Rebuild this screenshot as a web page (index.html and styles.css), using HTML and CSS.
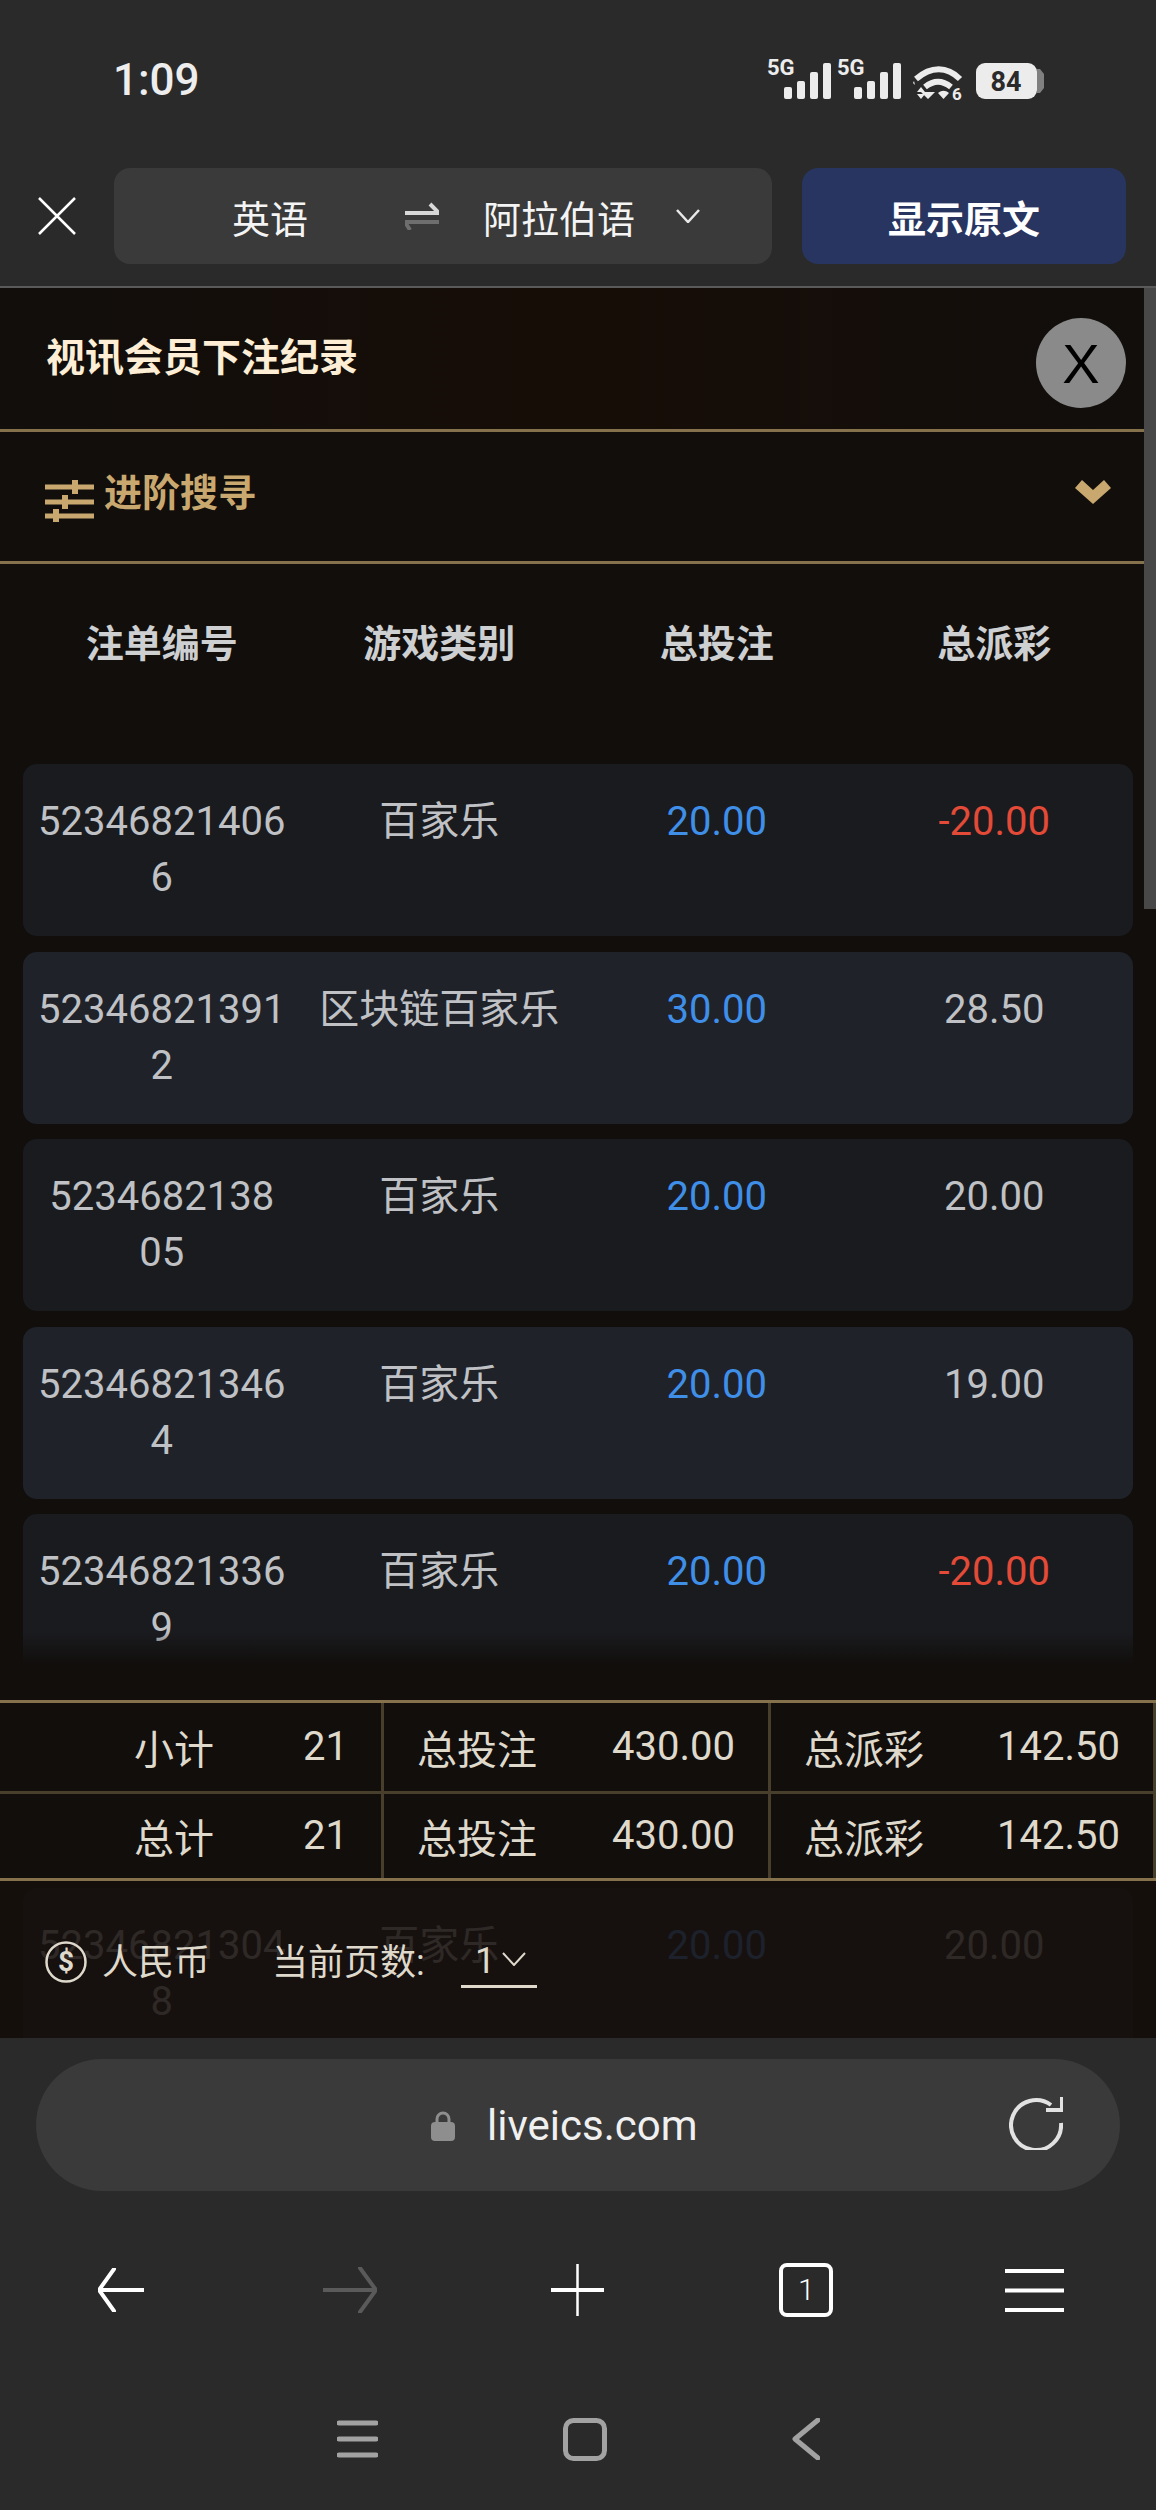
FILE: index.html
```html
<!DOCTYPE html>
<html lang="zh">
<head>
<meta charset="utf-8">
<title>视讯会员下注纪录</title>
<link rel="stylesheet" href="styles.css">
</head>
<body>
<div class="phone">
  <header class="chrome-top">
    <div class="status">
      <span class="time">1:09</span>
      <svg class="status-icons" width="290" height="46" viewBox="760 58 290 46">
        <g class="sig">
          <text x="767" y="75" class="fiveg">5G</text>
          <rect x="784" y="87" width="8" height="12" rx="2"/><rect x="797" y="81" width="8" height="18" rx="2"/><rect x="810" y="72" width="8" height="27" rx="2"/><rect x="823" y="63" width="8" height="36" rx="2"/>
          <text x="837" y="75" class="fiveg">5G</text>
          <rect x="854" y="87" width="8" height="12" rx="2"/><rect x="867" y="81" width="8" height="18" rx="2"/><rect x="880" y="72" width="8" height="27" rx="2"/><rect x="893" y="63" width="8" height="36" rx="2"/>
          <path d="M928 99l-7-7h14z M913 86l-0 0 M915 85l-2-2 1-2 M921 88l-0 0"/>
          <path class="wifi" d="M916 79c15-13 31-13 44 0M925 87c9-7 17-7 26 0" />
          <path d="M938 93c4-3 7-3 11 0l-5.500 6z"/>
          <path d="M917 92l4-5 4 5zM917 94h8l-4 5z"/>
          <text x="952" y="100" class="six">6</text>
          <rect x="976" y="63" width="61" height="36" rx="9"/>
          <path class="bat-cap" d="M1037 69l3 0 4 5v14l-4 5h-3z"/>
          <text x="1006" y="91" class="batt">84</text>
        </g>
      </svg>
    </div>
    <div class="toolbar">
      <svg class="tool-x" width="38" height="38" viewBox="0 0 38 38"><path d="M1 1l36 36M37 1L1 37"/></svg>
      <div class="lang-pill">
        <span class="lang-a">英语</span>
        <svg class="swap" width="34" height="28" viewBox="0 0 34 28"><path class="swap-a" d="M0 11h34l-9-9"/><path class="swap-b" d="M34 20H0l5 8"/></svg>
        <span class="lang-b">阿拉伯语</span>
        <svg class="lang-chev" width="24" height="14" viewBox="0 0 24 14"><path d="M1 1l11 12L23 1"/></svg>
      </div>
      <button class="show-orig">显示原文</button>
    </div>
  </header>

  <main class="view">
    <div class="scrollbar"></div>
    <div class="title-row">
      <h1 class="title">视讯会员下注纪录</h1>
      <button class="close">X</button>
    </div>
    <div class="adv-row">
      <div class="adv-left">
        <svg class="adv-icon" width="49" height="42" viewBox="0 0 49 42"><path d="M0 7h49M0 22h49M0 36h49"/><path class="knob" d="M30 0v14M20 15v14M11 29v13"/></svg>
        <span class="adv-text">进阶搜寻</span>
      </div>
      <svg class="adv-chev" width="36" height="24" viewBox="0 0 36 24"><path d="M0 8l7-8 11 10L29 0l7 8-18 16z"/></svg>
    </div>
    <div class="grid head">
      <div>注单编号</div><div>游戏类别</div><div>总投注</div><div>总派彩</div>
    </div>
    <div class="cards">
      <div class="grid card"><div>52346821406<br>6</div><div>百家乐</div><div class="blue">20.00</div><div class="red">-20.00</div></div>
      <div class="grid card alt"><div>52346821391<br>2</div><div>区块链百家乐</div><div class="blue">30.00</div><div>28.50</div></div>
      <div class="grid card"><div>5234682138<br>05</div><div>百家乐</div><div class="blue">20.00</div><div>20.00</div></div>
      <div class="grid card alt"><div>52346821346<br>4</div><div>百家乐</div><div class="blue">20.00</div><div>19.00</div></div>
      <div class="grid card"><div>52346821336<br>9</div><div>百家乐</div><div class="blue">20.00</div><div class="red">-20.00</div></div>
      <div class="grid card alt"></div>
      <div class="grid card"><div>52346821304<br>8</div><div>百家乐</div><div class="blue">20.00</div><div>20.00</div></div>
    </div>

    <div class="summary-wrap">
      <div class="fade"></div>
      <div class="summary">
        <div class="s-row">
          <div class="s-cell s-first"><span>小计</span><span>21</span></div>
          <div class="s-cell"><span>总投注</span><span>430.00</span></div>
          <div class="s-cell"><span>总派彩</span><span>142.50</span></div>
        </div>
        <div class="s-row">
          <div class="s-cell s-first"><span>总计</span><span>21</span></div>
          <div class="s-cell"><span>总投注</span><span>430.00</span></div>
          <div class="s-cell"><span>总派彩</span><span>142.50</span></div>
        </div>
      </div>
      <div class="pager">
        <svg class="coin" width="42" height="42" viewBox="0 0 42 42"><circle cx="21" cy="21" r="19.500"/><text x="21" y="30" class="coin-s">$</text></svg>
        <span class="cur">人民币</span>
        <span class="page-label">当前页数:</span>
        <span class="page-sel"><span class="page-num">1</span><svg width="24" height="14" viewBox="0 0 24 14"><path d="M1 1l11 12L23 1"/></svg></span>
      </div>
    </div>
  </main>

  <footer class="chrome-bottom">
    <div class="url-bar">
      <svg class="lock" width="24" height="30" viewBox="0 0 24 30"><path class="lock-bow" d="M6 14V8a6 6 0 0 1 12 0v6"/><rect x="0" y="11" width="24" height="19" rx="4"/></svg>
      <span class="url">liveics.com</span>
      <svg class="reload" width="54" height="54" viewBox="0 0 54 54"><path d="M42 9a25 25 0 1 0 10 18"/><path d="M37 14h16V1" class="reload-head"/></svg>
    </div>
    <nav class="nav">
      <svg width="46" height="44" viewBox="0 0 46 44"><path d="M46 22H1M16 1L1 22l15 21"/></svg>
      <svg class="dim" width="54" height="46" viewBox="0 0 54 46"><path d="M0 23h53M37 1l16 22-16 22"/></svg>
      <svg width="53" height="52" viewBox="0 0 53 52"><path class="thin" d="M26.500 0v52"/><path d="M0 26h53"/></svg>
      <div class="tab-box">1</div>
      <svg width="59" height="43" viewBox="0 0 59 43"><path d="M0 2h59M0 21.500h59M0 41h59"/></svg>
    </nav>
    <nav class="sys-nav">
      <svg width="41" height="38" viewBox="0 0 41 38"><path d="M2 3h37M2 19h37M2 35h37"/></svg>
      <svg width="44" height="43" viewBox="0 0 44 43"><rect x="2.500" y="2.500" width="39" height="38" rx="8"/></svg>
      <svg width="28" height="42" viewBox="0 0 28 42"><path d="M26 2L3 21l23 19"/></svg>
    </nav>
  </footer>
</div>
</body>
</html>
```
FILE: styles.css
```css
* { box-sizing: border-box; }
html, body { margin: 0; padding: 0; background: #2a2a2a; }
body { font-family: Roboto, "Noto Sans CJK SC", sans-serif; }
.phone { width: 1156px; height: 2510px; display: flex; flex-direction: column; overflow: hidden; }
svg { display: block; fill: none; }

.chrome-top { height: 288px; flex: none; background: #2a2a2a; border-bottom: 2px solid #5a5a5a; }
.status { height: 168px; padding: 50px 0 0 113px; position: relative; }
.time { font-size: 44px; line-height: 60px; font-weight: 500; color: #ededed; display: block; }
.status-icons { position: absolute; left: 760px; top: 58px; }
.sig { fill: #ececec; }
.fiveg { font: 700 22px Roboto, sans-serif; }
.six { font: 700 17px Roboto, sans-serif; }
.batt { font: 700 27px Roboto, sans-serif; fill: #2a2a2a; text-anchor: middle; }
.bat-cap { fill: #808080; }
.wifi { fill: none; stroke: #ececec; stroke-width: 6; }

.toolbar { display: flex; align-items: stretch; height: 96px; padding: 0 30px 0 38px; }
.tool-x { align-self: center; margin-right: 38px; stroke: #fff; stroke-width: 2.500; flex: none; }
.tool-x path { stroke: #fff; stroke-width: 2.500; }
.lang-pill { width: 658px; background: #3a3a3a; border-radius: 16px; display: flex; align-items: center; padding-left: 118px; font-size: 38px; color: #f4f4f4; }
.lang-a { width: 76px; margin-right: 97px; }
.swap { margin-right: 44px; flex: none; }
.swap-a { stroke: #d8d8d8; stroke-width: 4; }
.swap-b { stroke: #6e6e6e; stroke-width: 4; }
.lang-b { width: 152px; margin-right: 41px; }
.lang-chev path { stroke: #e8e8e8; stroke-width: 2.500; }
.show-orig { margin-left: 30px; width: 324px; border: 0; border-radius: 16px; background: #283560; color: #fff; font: 700 38px Roboto, "Noto Sans CJK SC", sans-serif; padding: 0; }

.view { height: 1750px; flex: none; position: relative; overflow: hidden; background: #110e0c; }
.scrollbar { position: absolute; right: 0; top: 0; width: 12px; height: 621px; background: #484848; z-index: 1; }
.title-row { height: 144px; border-bottom: 3px solid #85724d; display: flex; align-items: flex-start; justify-content: space-between; padding: 30px 30px 0 46px; background: linear-gradient(90deg, #110e0c, #170d07 50%, #110e0c); position: relative; }
.title { margin: 12px 0 0; font-size: 39px; line-height: 56px; font-weight: 700; color: #fdeed5; }
.close { width: 90px; height: 90px; border-radius: 50%; border: 0; background: #8a8a8a; color: #000; font: 400 56px "Liberation Sans", sans-serif; padding: 0; }
.adv-row { height: 132px; border-bottom: 3px solid #85724d; display: flex; align-items: center; justify-content: space-between; padding: 0 45px 0 45px; }
.adv-left { display: flex; align-items: flex-start; }
.adv-icon { margin-top: 9px; margin-right: 10px; }
.adv-icon path { stroke: #c9a86f; stroke-width: 5; }
.adv-icon .knob { stroke-width: 6; }
.adv-text { font-size: 38px; line-height: 44px; font-weight: 700; color: #c9a86f; }
.adv-chev path { fill: #c9a86f; }
.adv-chev { margin-top: -10px; }

.grid { display: grid; grid-template-columns: repeat(4, 1fr); text-align: center; }
.head { margin: 0 23px; padding: 52px 0 92px; font-size: 38px; line-height: 56px; color: #cdcfd1; font-weight: 700; }
.cards { display: flex; flex-direction: column; gap: 15.5px; margin: 0 23px; }
.card { min-height: 171px; padding: 30px 0; background: #1a1b1f; border-radius: 14px; font-size: 40px; line-height: 56px; color: #bfc1c4; }
.card.alt { background: #20222a; }
.blue { color: #3f8fe8; }
.red { color: #e34a37; }

.summary-wrap { position: absolute; left: 0; right: 0; bottom: 0; }
.fade { height: 68px; background: linear-gradient(180deg, rgba(17,14,12,0), #110e0c 48%); }
.summary { background: #110e0c; border-top: 3px solid #85724d; border-bottom: 3px solid #85724d; color: #dfd9cc; font-size: 40px; }
.s-row { display: grid; grid-template-columns: 384px 387px 385px; height: 87.500px; }
.s-row + .s-row { border-top: 3px solid #483e2c; }
.s-cell { display: flex; align-items: center; justify-content: space-between; padding: 0 33px; border-right: 3px solid #483e2c; }
.s-first { padding-left: 134px; }
.pager { height: 157px; background: rgba(22,15,12,0.86); display: flex; align-items: flex-start; padding: 60px 0 0 45px; color: #dfd9cc; font-size: 36px; line-height: 44px; }
.coin { margin-right: 15px; }
.coin circle { stroke: #dfd9cc; stroke-width: 2.500; }
.coin-s { fill: #dfd9cc; font: 700 28px Roboto, sans-serif; text-anchor: middle; }
.cur { margin-right: 62px; }
.page-label { width: 189px; }
.page-sel { width: 76px; height: 47px; border-bottom: 3px solid #dfd9cc; display: flex; align-items: flex-start; padding-left: 14px; margin-top: 0; }
.page-num { width: 27px; line-height: 40px; }
.page-sel svg { margin-top: 11px; }
.page-sel path { stroke: #dfd9cc; stroke-width: 2; }

.chrome-bottom { flex: 1; background: #2a2a2a; padding-top: 21px; }
.url-bar { margin: 0 36px; height: 132px; border-radius: 66px; background: #3a3a3a; display: flex; align-items: center; padding-left: 395px; position: relative; }
.lock { margin-right: 32px; margin-top: 2px; }
.lock rect { fill: #8e8e8e; }
.lock-bow { stroke: #8e8e8e; stroke-width: 3; }
.url { font-size: 42px; color: #f0f0f0; width: 528px; }
.reload path { stroke: #e2e2e2; stroke-width: 4; }
.reload { flex: none; margin-top: -4px; margin-left: 52px; position: absolute; left: 921px; }
.nav { height: 198px; padding: 0 7px; display: grid; grid-template-columns: repeat(5, 1fr); justify-items: center; align-items: center; }
.nav svg path { stroke: #fff; stroke-width: 4; stroke-linecap: round; }
.nav svg path.thin { stroke-width: 2.500; }
.nav svg.dim path { stroke: #5a5a5a; }
.tab-box { width: 54px; height: 54px; border: 4px solid #fff; border-radius: 8px; color: #fff; font-size: 30px; font-weight: 300; line-height: 46px; text-align: center; }
.sys-nav { height: 100px; display: flex; justify-content: center; align-items: center; gap: 185px; }
.sys-nav svg path, .sys-nav svg rect { stroke: #a2a2a2; stroke-width: 5; stroke-linecap: round; stroke-linejoin: round; }
```
